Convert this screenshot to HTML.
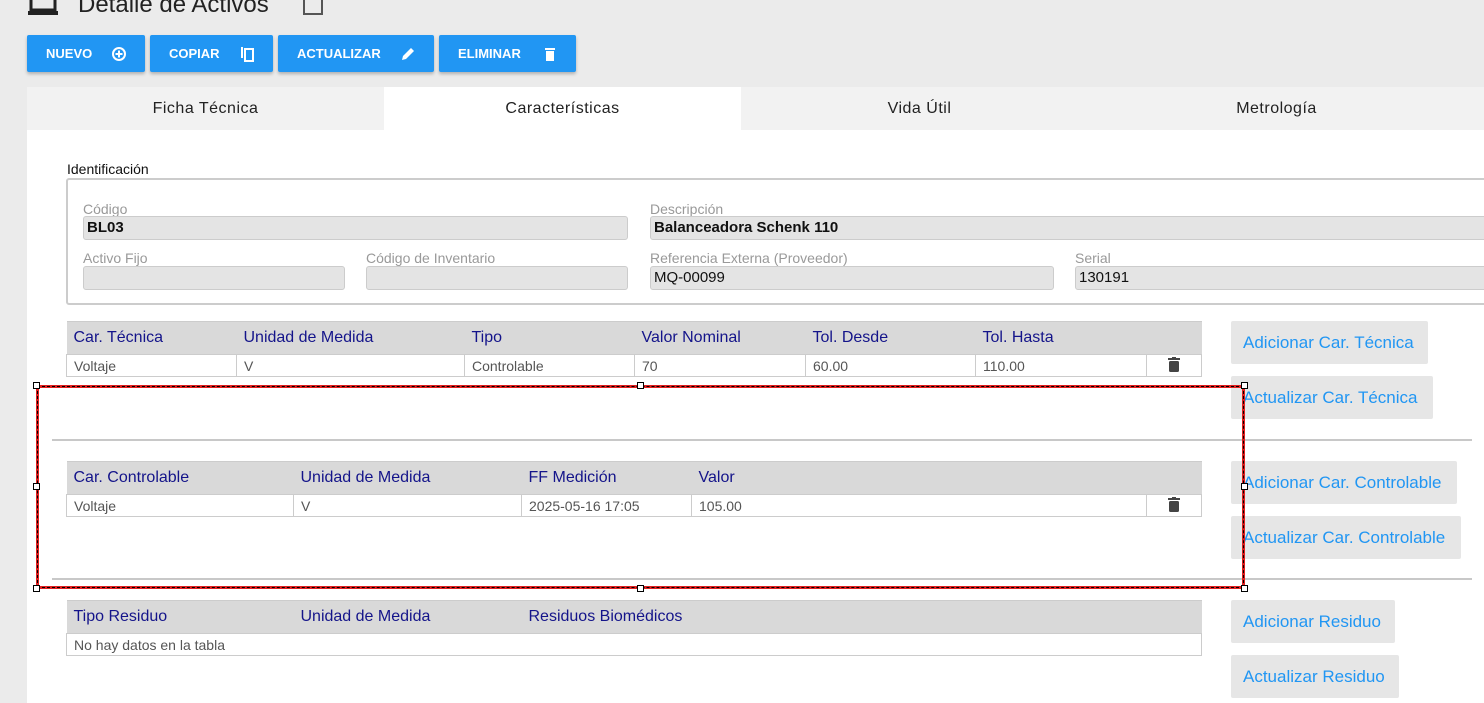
<!DOCTYPE html>
<html><head><meta charset="utf-8"><style>
*{box-sizing:border-box;margin:0;padding:0}
body{width:1484px;height:703px;overflow:hidden;background:#ebebeb;font-family:"Liberation Sans",sans-serif;position:relative}
.a{position:absolute}
.btn{position:absolute;top:35px;height:37px;background:#2196f3;color:#fff;font-weight:bold;font-size:13px;border-radius:2px;box-shadow:0 2px 3px rgba(0,0,0,.25);display:flex;align-items:center;padding-left:19px}
.btn svg{position:absolute;right:18px;top:11px}
.tab{position:absolute;top:87px;height:43px;font-size:16px;letter-spacing:.5px;color:#222;display:flex;align-items:center;justify-content:center;background:#f2f2f2}
.lbl{position:absolute;font-size:14px;color:#999}
.inp{position:absolute;height:24px;background:#e4e4e4;border:1px solid #ccc;border-radius:3px;font-size:15px;padding-left:3px;line-height:22px;color:#111}
table{position:absolute;border-collapse:collapse;font-size:16px;left:66px;width:1136px}
th{background:#d9d9d9;color:#14148a;text-align:left;font-weight:normal;height:33px;padding-left:7px;border:1px solid #ccc;border-right:none;border-left:none}
td{height:22px;color:#555;padding-left:7px;border:1px solid #ccc;font-size:14px}
.sb{position:absolute;left:1231px;height:43px;background:#e6e6e6;color:#2196f3;font-size:17px;border-radius:2px;padding-left:12px;display:flex;align-items:center}
.hr{position:absolute;left:52px;width:1420px;height:2px;background:#c8c8c8}
.h{position:absolute;width:7px;height:7px;background:#fff;border:1px solid #000}
</style></head><body>
<svg class="a" style="left:27px;top:0" width="32" height="16" viewBox="0 0 32 16"><rect x="4" y="-6" width="24" height="16" fill="none" stroke="#222" stroke-width="3"/><rect x="1" y="11" width="30" height="4" fill="#222"/></svg>
<div class="a" style="left:78px;top:-9px;font-size:24px;color:#222">Detalle de Activos</div>
<div class="a" style="left:303px;top:-5px;width:20px;height:20px;border:2px solid #555"></div>

<div class="btn" style="left:27px;width:118px">NUEVO<svg width="16" height="16" viewBox="0 0 16 16"><circle cx="8" cy="8" r="6" fill="none" stroke="#fff" stroke-width="2"/><path d="M8 4.5v7M4.5 8h7" stroke="#fff" stroke-width="2"/></svg></div>
<div class="btn" style="left:150px;width:123px">COPIAR<svg width="16" height="16" viewBox="0 0 16 16"><path d="M3 1v11" stroke="#fff" stroke-width="2"/><rect x="6" y="3" width="8" height="12" fill="none" stroke="#fff" stroke-width="2"/></svg></div>
<div class="btn" style="left:278px;width:156px">ACTUALIZAR<svg width="16" height="16" viewBox="0 0 16 16"><path d="M2 14l1-4 8-8 3 3-8 8z" fill="#fff"/></svg></div>
<div class="btn" style="left:439px;width:137px">ELIMINAR<svg width="16" height="16" viewBox="0 0 16 16"><rect x="3" y="2" width="10" height="2" fill="#fff"/><rect x="4" y="5" width="8" height="10" fill="#fff"/></svg></div>

<div class="a" style="left:27px;top:87px;width:1457px;height:616px;background:#fff"></div>
<div class="a" style="left:27px;top:87px;width:1457px;height:43px;background:#f2f2f2"></div>
<div class="tab" style="left:27px;width:357px">Ficha Técnica</div>
<div class="tab" style="left:384px;width:357px;background:#fff">Características</div>
<div class="tab" style="left:741px;width:357px">Vida Útil</div>
<div class="tab" style="left:1098px;width:357px">Metrología</div>

<div class="a" style="left:66px;top:178px;width:1430px;height:127px;border:2px solid #ccc;border-radius:3px"></div>
<div class="a" style="left:64px;top:161px;background:#fff;padding:0 3px;font-size:14px;color:#111">Identificación</div>
<div class="lbl" style="left:83px;top:201px">Código</div>
<div class="inp" style="left:83px;top:216px;width:545px;font-weight:bold">BL03</div>
<div class="lbl" style="left:650px;top:201px">Descripción</div>
<div class="inp" style="left:650px;top:216px;width:840px;font-weight:bold">Balanceadora Schenk 110</div>
<div class="lbl" style="left:83px;top:250px">Activo Fijo</div>
<div class="inp" style="left:83px;top:266px;width:262px"></div>
<div class="lbl" style="left:366px;top:250px">Código de Inventario</div>
<div class="inp" style="left:366px;top:266px;width:262px"></div>
<div class="lbl" style="left:650px;top:250px">Referencia Externa (Proveedor)</div>
<div class="inp" style="left:650px;top:266px;width:404px">MQ-00099</div>
<div class="lbl" style="left:1075px;top:250px">Serial</div>
<div class="inp" style="left:1075px;top:266px;width:420px">130191</div>

<table style="top:321px"><tr><th style="width:170px">Car. Técnica</th><th style="width:228px">Unidad de Medida</th><th style="width:170px">Tipo</th><th style="width:171px">Valor Nominal</th><th style="width:170px">Tol. Desde</th><th style="width:171px">Tol. Hasta</th><th></th></tr>
<tr><td>Voltaje</td><td>V</td><td>Controlable</td><td>70</td><td>60.00</td><td>110.00</td><td style="text-align:center;padding:0"><svg width="12" height="15" viewBox="0 0 12 15"><rect x="0" y="1" width="12" height="2" fill="#444"/><rect x="4" y="0" width="4" height="2" fill="#444"/><rect x="1" y="4" width="10" height="11" rx="1.5" fill="#444"/></svg></td></tr></table>
<div class="sb" style="top:321px;width:197px">Adicionar Car. Técnica</div>
<div class="sb" style="top:376px;width:202px">Actualizar Car. Técnica</div>
<div class="hr" style="top:439px"></div>

<table style="top:461px"><tr><th style="width:227px">Car. Controlable</th><th style="width:228px">Unidad de Medida</th><th style="width:170px">FF Medición</th><th style="width:455px">Valor</th><th></th></tr>
<tr><td>Voltaje</td><td>V</td><td>2025-05-16 17:05</td><td>105.00</td><td style="text-align:center;padding:0"><svg width="12" height="15" viewBox="0 0 12 15"><rect x="0" y="1" width="12" height="2" fill="#444"/><rect x="4" y="0" width="4" height="2" fill="#444"/><rect x="1" y="4" width="10" height="11" rx="1.5" fill="#444"/></svg></td></tr></table>
<div class="sb" style="top:461px;width:226px">Adicionar Car. Controlable</div>
<div class="sb" style="top:516px;width:230px">Actualizar Car. Controlable</div>
<div class="hr" style="top:578px"></div>

<table style="top:600px"><tr><th style="width:227px">Tipo Residuo</th><th style="width:228px">Unidad de Medida</th><th>Residuos Biomédicos</th></tr>
<tr><td colspan="3" style="border-left:1px solid #ccc">No hay datos en la tabla</td></tr></table>
<div class="sb" style="top:600px;width:164px">Adicionar Residuo</div>
<div class="sb" style="top:655px;width:168px">Actualizar Residuo</div>

<div class="a" style="left:36px;top:385px;width:1209px;height:204px;border:3px solid #e02020"></div>
<div class="a" style="left:37px;top:386px;width:1207px;height:202px;border:1px dashed #000"></div>
<div class="h" style="left:33px;top:382px"></div><div class="h" style="left:637px;top:382px"></div><div class="h" style="left:1241px;top:382px"></div>
<div class="h" style="left:33px;top:483px"></div><div class="h" style="left:1241px;top:483px"></div>
<div class="h" style="left:33px;top:585px"></div><div class="h" style="left:637px;top:585px"></div><div class="h" style="left:1241px;top:585px"></div>
</body></html>
